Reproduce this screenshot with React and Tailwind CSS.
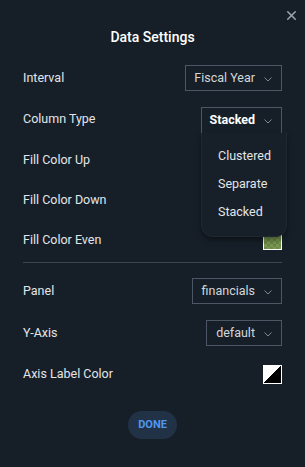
import { X } from "lucide-react";

function Chevron() {
  return (
    <svg width="8" height="5" viewBox="0 0 8 5" className="ml-[9px] mt-[3px] shrink-0">
      <path d="M0.5 0.5 L4 4 L7.5 0.5" fill="none" stroke="#7d8894" strokeWidth="1" />
    </svg>
  );
}

function SelectBox({ value, width, bold, open }) {
  return (
    <div
      className={`flex h-[26px] shrink-0 items-center justify-end whitespace-nowrap border border-[#4b5764] pr-[9px] ${width} ${
        open ? "border-b-0" : ""
      }`}
    >
      <span className={bold ? "font-bold text-white" : "text-[#d4d7db]"}>{value}</span>
      <Chevron />
    </div>
  );
}

function Row({ label, children, h = "h-[42px]" }) {
  return (
    <div className={`flex items-center justify-between ${h}`}>
      <span className="text-[#e3e5e8]">{label}</span>
      {children}
    </div>
  );
}

function Swatch() {
  return (
    <div
      className="h-[19px] w-[19px] border border-white"
      style={{
        backgroundColor: "#7c9a52",
        backgroundImage:
          "linear-gradient(45deg,#6b8a47 25%,transparent 25%,transparent 75%,#6b8a47 75%),linear-gradient(45deg,#6b8a47 25%,transparent 25%,transparent 75%,#6b8a47 75%)",
        backgroundSize: "6px 6px",
        backgroundPosition: "0 0,3px 3px",
      }}
    />
  );
}

function App() {
  const options = ["Clustered", "Separate", "Stacked"];

  return (
    <div
      className="relative h-[467px] w-[305px] bg-[#161f28] px-[23px] text-[12.5px]"
      style={{ fontFamily: "Roboto, 'Liberation Sans', sans-serif" }}
    >
      <button className="absolute right-[6px] top-[8px] text-[#9aa3ac]">
        <X size={15} strokeWidth={2.5} />
      </button>

      <div className="pt-[28px] text-center text-[14px] font-medium leading-[18px] text-white">
        Data Settings
      </div>

      <div className="mt-[11px]">
        <Row label="Interval">
          <SelectBox value="Fiscal Year" width="w-[97px]" />
        </Row>
        <Row label="Column Type" h="h-[41px]">
          <div className="relative z-10">
            <SelectBox value="Stacked" width="w-[81px]" bold open />
            <div className="absolute left-0 top-[26px] w-[86px] rounded-b-[12px] border border-t-0 border-[#1f2831] bg-[#171f28] pb-[9px] pt-[10px] shadow-[0_3px_6px_rgba(0,0,0,0.45)]">
              {options.map((o) => (
                <div key={o} className="flex h-[28px] items-center pl-[16px] text-[#e3e5e8]">
                  {o}
                </div>
              ))}
            </div>
          </div>
        </Row>
        <Row label="Fill Color Up" h="h-10" />
        <Row label="Fill Color Down" h="h-10" />
        <Row label="Fill Color Even" h="h-10">
          <Swatch />
        </Row>
      </div>

      <div className="mt-[2px] border-t border-[#3b4652]" />

      <div className="mt-[7px]">
        <Row label="Panel">
          <SelectBox value="financials" width="w-[90px]" />
        </Row>
        <Row label="Y-Axis">
          <SelectBox value="default" width="w-[76px]" />
        </Row>
        <Row label="Axis Label Color" h="h-[41px]">
          <div className="h-[19px] w-[19px] border border-white bg-[linear-gradient(135deg,#ffffff_50%,#000000_50%)]" />
        </Row>
      </div>

      <div className="mt-[16px] flex justify-center">
        <button className="h-[28px] w-[49px] rounded-full bg-[#223246] text-[11px] font-bold text-[#4f97ef]">
          DONE
        </button>
      </div>
    </div>
  );
}

export default App;
